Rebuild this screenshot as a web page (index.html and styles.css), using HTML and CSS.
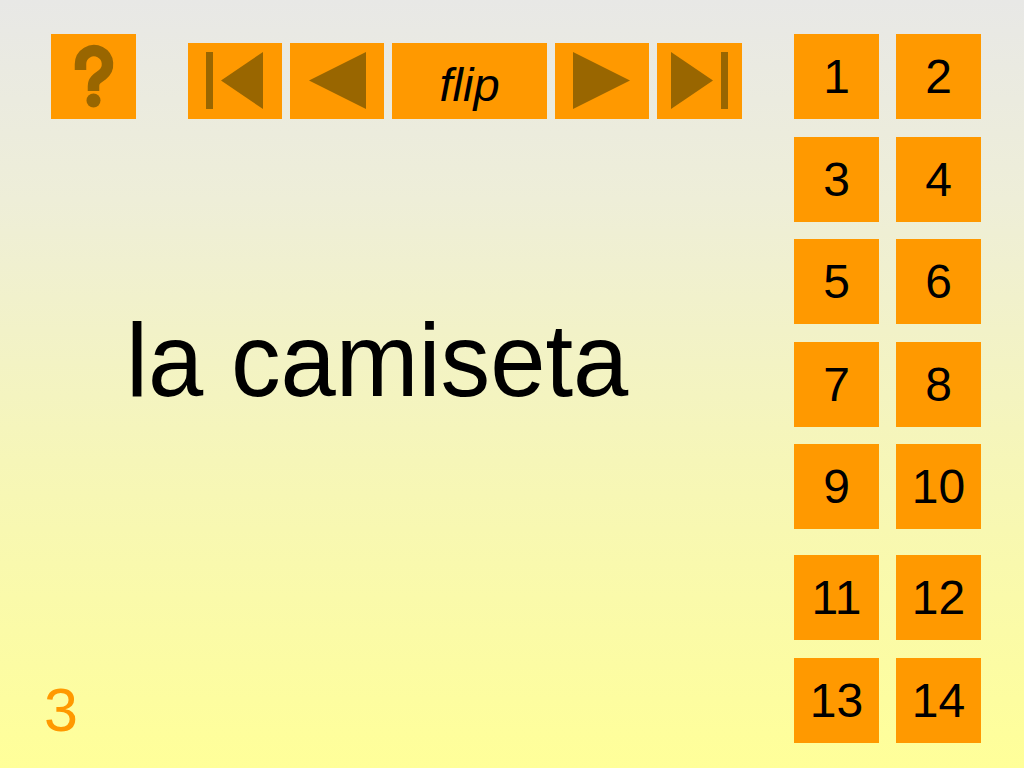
FILE: index.html
```html
<!DOCTYPE html>
<html>
<head>
<meta charset="utf-8">
<link rel="stylesheet" href="styles.css">
</head>
<body>
<div class="page">
  <div class="left">
    <div class="toolbar">
      <div class="btn help">
        <svg width="85" height="85" viewBox="0 0 85 85">
          <path d="M29.5 36 V30 A13.5 13.5 0 1 1 51 41 C46 44.5 42.5 46.5 42.5 52 V57" fill="none" stroke="#996600" stroke-width="11.5"/>
          <circle cx="42.5" cy="66.5" r="7" fill="#996600"/>
        </svg>
      </div>
      <div class="nav">
        <div class="btn navbtn w94">
          <svg width="94" height="76" viewBox="0 0 94 76">
            <rect x="18" y="9" width="7" height="57" fill="#996600"/>
            <polygon points="33,37.5 75,9 75,66" fill="#996600"/>
          </svg>
        </div>
        <div class="btn navbtn w94">
          <svg width="94" height="76" viewBox="0 0 94 76">
            <polygon points="19,37.5 76,9 76,66" fill="#996600"/>
          </svg>
        </div>
        <div class="btn navbtn flip">flip</div>
        <div class="btn navbtn w94">
          <svg width="94" height="76" viewBox="0 0 94 76">
            <polygon points="18,9 75,37.5 18,66" fill="#996600"/>
          </svg>
        </div>
        <div class="btn navbtn w85">
          <svg width="85" height="76" viewBox="0 0 85 76">
            <polygon points="14,9 56,37.5 14,66" fill="#996600"/>
            <rect x="64" y="9" width="7" height="57" fill="#996600"/>
          </svg>
        </div>
      </div>
    </div>
    <div class="word"><span class="wordtext">la camiseta</span></div>
    <div class="slideno">3</div>
  </div>
  <div class="grid">
    <div class="pair"><div class="btn num">1</div><div class="btn num">2</div></div>
    <div class="pair"><div class="btn num">3</div><div class="btn num">4</div></div>
    <div class="pair"><div class="btn num">5</div><div class="btn num">6</div></div>
    <div class="pair"><div class="btn num">7</div><div class="btn num">8</div></div>
    <div class="pair"><div class="btn num">9</div><div class="btn num">10</div></div>
    <div class="pair spaced"><div class="btn num">11</div><div class="btn num">12</div></div>
    <div class="pair"><div class="btn num">13</div><div class="btn num">14</div></div>
  </div>
</div>
</body>
</html>
```

FILE: styles.css
```css
html, body {
  margin: 0;
  padding: 0;
}
body {
  width: 1024px;
  height: 768px;
  overflow: hidden;
  background: linear-gradient(to bottom, #e8e8e6 0%, #eeeed8 26%, #f6f6b8 60%, #ffff99 100%);
  font-family: "Liberation Sans", Arial, Helvetica, sans-serif;
  color: #000;
}
.page {
  display: flex;
  height: 768px;
  box-sizing: border-box;
  padding: 34px 43px 0 44px;
}
.left {
  flex: 1;
  display: flex;
  flex-direction: column;
}
.toolbar {
  display: flex;
  align-items: flex-end;
  padding-left: 7px;
}
.btn {
  background: #ff9900;
  display: flex;
  align-items: center;
  justify-content: center;
}
.btn svg {
  display: block;
}
.help {
  width: 85px;
  height: 85px;
  margin-right: 52px;
}
.nav {
  display: flex;
  gap: 8px;
}
.navbtn {
  height: 76px;
}
.w94 { width: 94px; }
.w85 { width: 85px; }
.flip {
  width: 155px;
  font-size: 47px;
  font-style: italic;
  box-sizing: border-box;
  padding-top: 6px;
}
.word {
  margin-top: 189px;
  padding-left: 82px;
  font-size: 104px;
  line-height: 1;
  white-space: nowrap;
}
.wordtext {
  display: inline-block;
  transform: scaleX(0.955);
  transform-origin: left center;
}
.slideno {
  margin-top: auto;
  margin-bottom: 27px;
  font-size: 61px;
  line-height: 1;
  color: #ff9900;
}
.grid {
  display: flex;
  flex-direction: column;
  gap: 17.5px;
}
.pair {
  display: flex;
  gap: 17px;
}
.pair.spaced {
  margin-top: 8.5px;
}
.num {
  width: 85px;
  height: 85px;
  font-size: 48px;
}
```
